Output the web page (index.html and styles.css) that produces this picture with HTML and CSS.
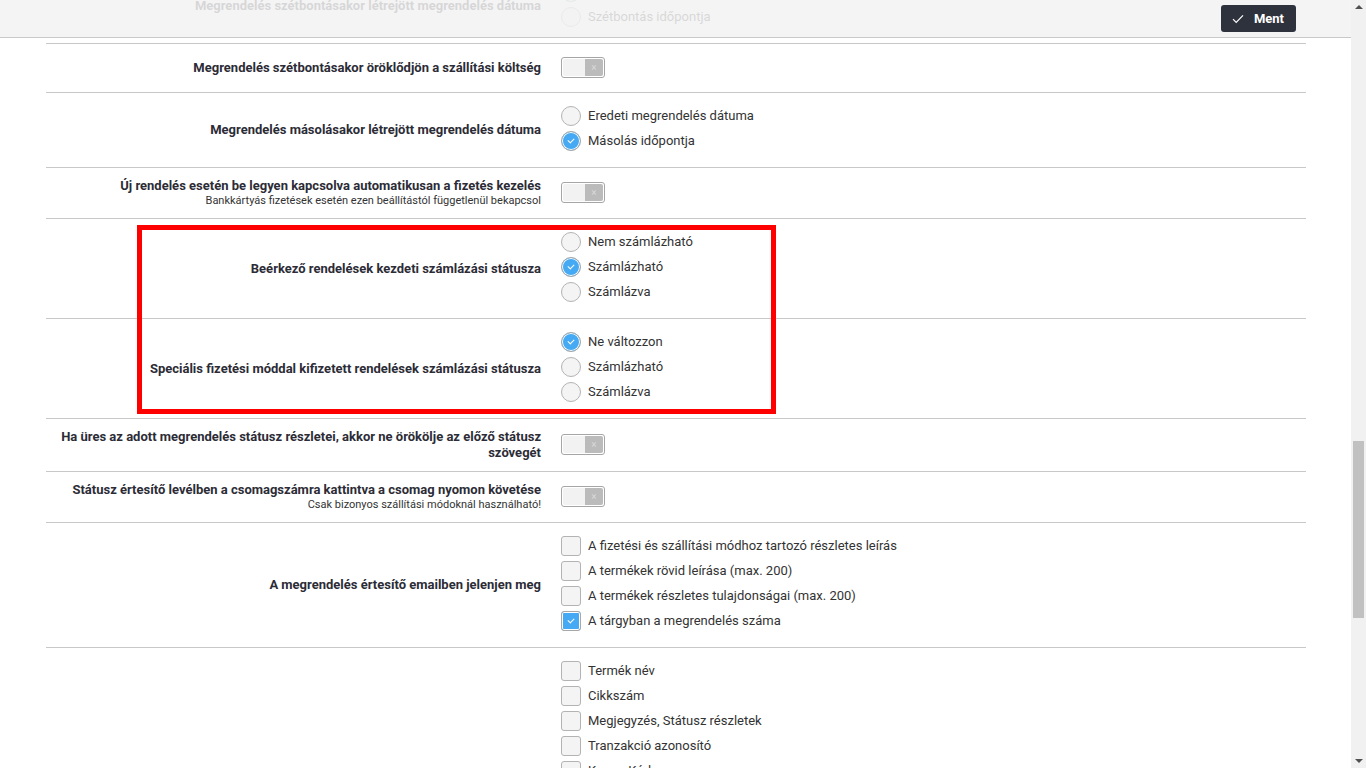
FILE: index.html
```html
<!DOCTYPE html>
<html lang="hu">
<head>
    <meta charset="UTF-8">
    <meta name="viewport" content="width=device-width, initial-scale=1.0">
    <title>Rendelés beállítások</title>
    <link rel="stylesheet" href="styles.css">
</head>
<body>

    <!-- Sticky save bar -->
    <header class="topbar">
        <button class="save-btn">
            <svg width="12" height="10" viewBox="0 0 12 10"><path d="M1 5.2 L4.2 8.4 L11 1.4" fill="none" stroke="#fff" stroke-width="1.2"/></svg>
            Ment
        </button>
    </header>

    <!-- Page scrollbar -->
    <div class="scrollbar">
        <span class="arrow up"></span>
        <span class="thumb"></span>
        <span class="arrow down"></span>
    </div>

    <main class="settings">

        <div class="row">
            <div class="label"><strong>Megrendelés szétbontásakor létrejött megrendelés dátuma</strong></div>
            <div class="control">
                <label class="option"><span class="radio checked"></span>Eredeti megrendelés dátuma</label>
                <label class="option"><span class="radio"></span>Szétbontás időpontja</label>
            </div>
        </div>

        <div class="row">
            <div class="label"><strong>Megrendelés szétbontásakor öröklődjön a szállítási költség</strong></div>
            <div class="control">
                <div class="option switch"><span class="toggle"><span class="knob"></span><span class="off">×</span></span></div>
            </div>
        </div>

        <div class="row">
            <div class="label"><strong>Megrendelés másolásakor létrejött megrendelés dátuma</strong></div>
            <div class="control">
                <label class="option"><span class="radio"></span>Eredeti megrendelés dátuma</label>
                <label class="option"><span class="radio checked"></span>Másolás időpontja</label>
            </div>
        </div>

        <div class="row">
            <div class="label">
                <strong>Új rendelés esetén be legyen kapcsolva automatikusan a fizetés kezelés</strong>
                <small>Bankkártyás fizetések esetén ezen beállítástól függetlenül bekapcsol</small>
            </div>
            <div class="control">
                <div class="option switch"><span class="toggle"><span class="knob"></span><span class="off">×</span></span></div>
            </div>
        </div>

        <div class="highlighted">
            <div class="row">
                <div class="label"><strong>Beérkező rendelések kezdeti számlázási státusza</strong></div>
                <div class="control">
                    <label class="option"><span class="radio"></span>Nem számlázható</label>
                    <label class="option"><span class="radio checked"></span>Számlázható</label>
                    <label class="option"><span class="radio"></span>Számlázva</label>
                </div>
            </div>

            <div class="row">
                <div class="label"><strong>Speciális fizetési móddal kifizetett rendelések számlázási státusza</strong></div>
                <div class="control">
                    <label class="option"><span class="radio checked"></span>Ne változzon</label>
                    <label class="option"><span class="radio"></span>Számlázható</label>
                    <label class="option"><span class="radio"></span>Számlázva</label>
                </div>
            </div>
        </div>

        <div class="row">
            <div class="label"><strong>Ha üres az adott megrendelés státusz részletei, akkor ne örökölje az előző státusz szövegét</strong></div>
            <div class="control">
                <div class="option switch"><span class="toggle"><span class="knob"></span><span class="off">×</span></span></div>
            </div>
        </div>

        <div class="row">
            <div class="label">
                <strong>Státusz értesítő levélben a csomagszámra kattintva a csomag nyomon követése</strong>
                <small>Csak bizonyos szállítási módoknál használható!</small>
            </div>
            <div class="control">
                <div class="option switch"><span class="toggle"><span class="knob"></span><span class="off">×</span></span></div>
            </div>
        </div>

        <div class="row">
            <div class="label"><strong>A megrendelés értesítő emailben jelenjen meg</strong></div>
            <div class="control">
                <label class="option"><span class="checkbox"></span>A fizetési és szállítási módhoz tartozó részletes leírás</label>
                <label class="option"><span class="checkbox"></span>A termékek rövid leírása (max. 200)</label>
                <label class="option"><span class="checkbox"></span>A termékek részletes tulajdonságai (max. 200)</label>
                <label class="option"><span class="checkbox checked"></span>A tárgyban a megrendelés száma</label>
            </div>
        </div>

        <div class="row">
            <div class="label"><strong>Rendelés exportban megjelenő mezők</strong></div>
            <div class="control">
                <label class="option"><span class="checkbox"></span>Termék név</label>
                <label class="option"><span class="checkbox"></span>Cikkszám</label>
                <label class="option"><span class="checkbox"></span>Megjegyzés, Státusz részletek</label>
                <label class="option"><span class="checkbox"></span>Tranzakció azonosító</label>
                <label class="option"><span class="checkbox"></span>Kupon Kód</label>
                <label class="option"><span class="checkbox"></span>Szállítási mód</label>
                <label class="option"><span class="checkbox"></span>Fizetési mód</label>
                <label class="option"><span class="checkbox"></span>Vevő telefonszáma</label>
                <label class="option"><span class="checkbox"></span>Vevő email címe</label>
                <label class="option"><span class="checkbox"></span>Számlázási cím</label>
                <label class="option"><span class="checkbox"></span>Szállítási cím</label>
            </div>
        </div>

    </main>

</body>
</html>
```

FILE: styles.css
```css
/* General */
body {
    margin: 0;
    font-family: Roboto, "Liberation Sans", Arial, sans-serif;
    font-size: 13px;
    color: #333;
    background: #fff;
}

/* Save bar */
.topbar {
    position: fixed;
    top: 0;
    left: 0;
    right: 15px;
    height: 38px;
    background: rgba(242, 242, 242, 0.86);
    border-bottom: 1px solid #c8c8c8;
    display: flex;
    justify-content: flex-end;
    align-items: flex-start;
    padding: 5px 55px 0 0;
    box-sizing: border-box;
    z-index: 5;
}

.save-btn {
    display: flex;
    align-items: center;
    gap: 10px;
    height: 27px;
    padding: 0 12px 0 11px;
    background: #2e323d;
    color: #fff;
    border: none;
    border-radius: 3px;
    font-family: Roboto, sans-serif;
    font-weight: bold;
    font-size: 13px;
}

/* Scrollbar */
.scrollbar {
    position: fixed;
    top: 0;
    right: 0;
    bottom: 0;
    width: 15px;
    background: #f1f1f1;
    z-index: 6;
}

.thumb {
    position: absolute;
    top: 441px;
    left: 2px;
    right: 2px;
    height: 177px;
    background: #c1c1c1;
}

.arrow {
    position: absolute;
    left: 4px;
    width: 0;
    height: 0;
    border-left: 4px solid transparent;
    border-right: 4px solid transparent;
}

.arrow.up {
    top: 5px;
    border-bottom: 4px solid #505050;
}

.arrow.down {
    bottom: 5px;
    border-top: 4px solid #505050;
}

/* Settings list */
.settings {
    margin: -31px 60px 0 46px;
}

.row {
    display: grid;
    grid-template-columns: 495px 1fr;
    column-gap: 20px;
    align-items: center;
    border-bottom: 1px solid #c8c8c8;
}

.label {
    text-align: right;
    padding: 10px 0;
    color: #2c2c36;
}

.label strong {
    display: block;
    line-height: 16px;
}

.label small {
    display: block;
    font-size: 11px;
    line-height: 14px;
    color: #333;
}

.control {
    padding: 10px 0 14px;
}

.option {
    display: flex;
    align-items: center;
    gap: 7px;
    height: 25px;
    color: #333;
}

.option.switch {
    height: 24px;
    margin: 1px 0 -1px;
}

/* Radio + checkbox */
.radio,
.checkbox {
    width: 20px;
    height: 20px;
    box-sizing: border-box;
    border: 1px solid #b3b3b3;
    background: #f4f4f4;
    flex-shrink: 0;
    display: flex;
    align-items: center;
    justify-content: center;
}

.radio {
    border-radius: 50%;
}

.checkbox {
    border-radius: 3px;
}

.radio.checked,
.checkbox.checked {
    background: #45a9f3;
    border-color: #a8a8a8;
    box-shadow: inset 0 0 0 1px #fff;
}

.radio.checked::after,
.checkbox.checked::after {
    content: "";
    width: 5px;
    height: 3px;
    border-left: 1px solid #fff;
    border-bottom: 1px solid #fff;
    transform: rotate(-45deg);
    margin-top: -2px;
}

/* Toggle switch */
.toggle {
    display: flex;
    width: 44px;
    height: 21px;
    box-sizing: border-box;
    border: 1px solid #a6a6a6;
    border-radius: 3px;
    padding: 1px;
    background: #fff;
}

.knob {
    width: 22px;
    background: #f2f2f2;
    border-radius: 2px 0 0 2px;
}

.off {
    flex: 1;
    background: #bbb;
    color: #d9d9d9;
    font-size: 10px;
    line-height: 17px;
    text-align: center;
    border-radius: 0 2px 2px 0;
}

/* Red annotation frame */
.highlighted {
    position: relative;
}

.highlighted::after {
    content: "";
    position: absolute;
    top: 6px;
    bottom: 5px;
    left: 91px;
    right: 530px;
    border: 5px solid #f00;
    pointer-events: none;
}
```
